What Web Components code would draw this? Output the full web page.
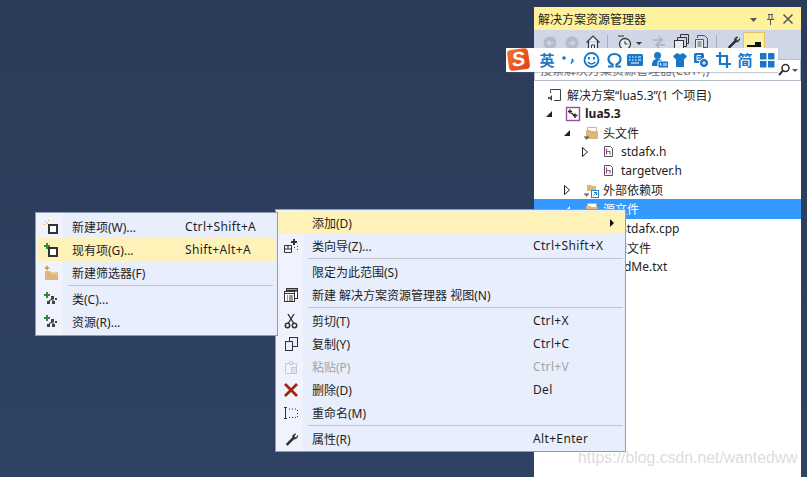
<!DOCTYPE html>
<html>
<head>
<meta charset="utf-8">
<style>
  html, body { margin: 0; height: 100%; overflow: hidden; background: #2d3e5d; }
  body { font: 12px "Noto Sans", "Noto Sans CJK SC", sans-serif; }
</style>
</head>
<body>
<ide-desktop>
  <solution-panel>
    <tree-row level="0" icon="sln">解决方案“lua5.3”(1 个项目)</tree-row>
    <tree-row level="1" arrow="open" icon="proj" bold>lua5.3</tree-row>
    <tree-row level="2" arrow="open" icon="folder">头文件</tree-row>
    <tree-row level="3" arrow="closed" icon="h">stdafx.h</tree-row>
    <tree-row level="3" icon="h">targetver.h</tree-row>
    <tree-row level="2" arrow="closed" icon="deps">外部依赖项</tree-row>
    <tree-row level="2" arrow="open" icon="folder" selected>源文件</tree-row>
    <tree-row level="3" icon="none">stdafx.cpp</tree-row>
    <tree-row level="2" icon="none">资源文件</tree-row>
    <tree-row level="2" icon="none">ReadMe.txt</tree-row>
  </solution-panel>
  <ime-bar></ime-bar>

  <context-menu style="left:275px;top:209px;width:351px;padding:2px 0 1px 2px" key-col="258" text-col="37">
    <menu-item key="" active submenu style="height:22px">添加(D)</menu-item>
    <menu-item icon="wizard" key="Ctrl+Shift+X">类向导(Z)...</menu-item>
    <menu-sep></menu-sep>
    <menu-item>限定为此范围(S)</menu-item>
    <menu-item icon="view">新建 解决方案资源管理器 视图(N)</menu-item>
    <menu-sep></menu-sep>
    <menu-item icon="cut" key="Ctrl+X">剪切(T)</menu-item>
    <menu-item icon="copy" key="Ctrl+C">复制(Y)</menu-item>
    <menu-item icon="paste" key="Ctrl+V" disabled>粘贴(P)</menu-item>
    <menu-item icon="del" key="Del">删除(D)</menu-item>
    <menu-item icon="rename">重命名(M)</menu-item>
    <menu-sep></menu-sep>
    <menu-item icon="wrench" key="Alt+Enter">属性(R)</menu-item>
  </context-menu>

  <context-menu style="left:35px;top:212px;width:243px" key-col="150" text-col="37">
    <menu-item icon="newitem" key="Ctrl+Shift+A">新建项(W)...</menu-item>
    <menu-item icon="existing" key="Shift+Alt+A" active>现有项(G)...</menu-item>
    <menu-item icon="newfilter">新建筛选器(F)</menu-item>
    <menu-sep></menu-sep>
    <menu-item icon="cls">类(C)...</menu-item>
    <menu-item icon="cls">资源(R)...</menu-item>
  </context-menu>

  <water-mark>https://blog.csdn.net/wantedww</water-mark>
</ide-desktop>

<script>
const ICONS = {
  sln: `<path d="M3.500 6V2.500h10v11H7" fill="none" stroke="#424242"/><path d="M1 9.500l1.500 1L5 8v6l-2.500-2.500L1 12.500z" fill="#424242"/>`,
  proj: `<rect x="1.500" y="1.500" width="13" height="13" fill="#fff" stroke="#9b4f96" stroke-width="1.400"/><path d="M5 3.500v4M3 5.500h4M10 7.500v4.500M8 9.500h4.500M6.500 7l2 2" fill="none" stroke="#222" stroke-width="1.400"/>`,
  folder: `<path d="M4.500 2.500h9v4h-9z" fill="#fff" stroke="#c9b48a"/><path d="M3.500 5.500h4l1 1h6v7h-11z" fill="#dcb67a" stroke="#dcb67a"/><path d="M1 12h5M2 13h3M3 14h1" stroke="#444"/>`,
  h: `<path d="M3.500 2.500h6l2 2v8h-8z" fill="#fff" stroke="#555"/><path d="M5.500 4.500v6M5.500 7.500h3.500v3" fill="none" stroke="#9b4f96" stroke-width="1.200"/>`,
  deps: `<path d="M4 3h4l1 1h4v5H4z" fill="#dcb67a"/><path d="M1 12h5M2 13h3M3 14h1" stroke="#444"/><rect x="8.500" y="8.500" width="7" height="7" fill="#fff" stroke="#1e88c9"/><path d="M10.500 13.500l3-3M11 10.500h2.500V13" fill="none" stroke="#1e88c9"/>`,
  newitem: `<rect x="6" y="6" width="8" height="8" fill="#fff" stroke="#333" stroke-width="2"/><path d="M2 2h1v1H2zM5 1h1v1H5zM1 5h1v1H1zM4 4h1v1H4z" fill="#d9a441"/>`,
  existing: `<rect x="6" y="6" width="8" height="8" fill="#fff" stroke="#333" stroke-width="2"/><path d="M3 1h2v2h2v2H5v2H3V5H1V3h2z" fill="#2e8b3d"/>`,
  newfilter: `<path d="M2 6h5l1 1h7v8H2z" fill="#dcb67a"/><path d="M8 8h6" stroke="#f3e2c2"/><path d="M4 0l1 2 2 1-2 1-1 2-1-2-2-1 2-1z" fill="#d9962b"/>`,
  cls: `<path d="M3 1h2v2h2v2H5v2H3V5H1V3h2z" fill="#2e8b3d"/><path d="M8 5h3v3H8zM4 10h3v3H4zM9 10h3v3H9zM12 7h2v2h-2z" fill="#424242"/><path d="M9 8L6 10M10 8v2" stroke="#424242" stroke-width="1.200"/>`,
  wizard: `<path d="M1.500 7.500h7v7h-7zM1.500 11h7M5 7.500V11" fill="none" stroke="#333"/><path d="M10 1h2v2h2v2h-2v2h-2V5H8V3h2z" fill="#333"/><path d="M14 8h1v1h-1zM11 9h1v1h-1zM14 11h1v1h-1z" fill="#333"/>`,
  view: `<rect x="3.500" y="1.500" width="11" height="10" fill="#fff" stroke="#333"/><path d="M3.500 3.500h11" stroke="#333" stroke-width="2"/><rect x="1.500" y="4.500" width="10" height="10" fill="#fff" stroke="#333"/><path d="M1.500 6.500h10M4 9h1M6 9h4M4 11h1M6 11h4M4 13h1M6 13h4" stroke="#333"/>`,
  cut: `<path d="M5 1l5.500 9M11 1L5.500 10" stroke="#333" stroke-width="1.400" fill="none"/><circle cx="4.500" cy="12.500" r="2.200" fill="none" stroke="#333" stroke-width="1.500"/><circle cx="11.500" cy="12.500" r="2.200" fill="none" stroke="#333" stroke-width="1.500"/>`,
  copy: `<rect x="6.500" y="1.500" width="8" height="9" fill="#e9eefc" stroke="#333"/><rect x="2.500" y="5.500" width="7" height="9" fill="#e9eefc" stroke="#333"/>`,
  paste: `<path d="M2.500 4.500h11v10h-11z" fill="none" stroke="#c6c9d0"/><path d="M6.500 2.500h3v3h-3z" fill="#e9eefc" stroke="#c6c9d0"/><path d="M8.500 8.500h5v6h-5z" fill="#dfe3ec" stroke="#c6c9d0"/>`,
  del: `<path d="M2 2l12 12M14 2L2 14" stroke="#a1260d" stroke-width="2.800"/>`,
  rename: `<path d="M2.500 3v10M1 2.500h3M1 13.500h3" stroke="#333" fill="none"/><path d="M6 4h1M9 4h1M12 4h1M14.500 5v1M14.500 8v1M14.500 11v1M6 12.500h1M9 12.500h1M12 12.500h1" stroke="#333" fill="none"/>`,
  wrench: `<path d="M14.500 4.500c.4 2-1.300 3.800-3.400 3.500L5 14c-.8.800-2.200-.6-1.400-1.400L9.500 6.500C9.200 4.400 11 2.600 13 3l-2 2 1 1.500 1 .4z" fill="#333" stroke="#333" stroke-width=".7"/>`
};

class IdeDesktop extends HTMLElement {
  constructor() {
    super();
    this.attachShadow({ mode: 'open' });
    this.shadowRoot.innerHTML = `
      <style>
        :host { display: block; position: relative; width: 807px; height: 477px; overflow: hidden;
          background: linear-gradient(#2c3b59, #2f4263); }
      </style>
      <slot></slot>`;
  }
}

class SolutionPanel extends HTMLElement {
  constructor() {
    super();
    this.attachShadow({ mode: 'open' });
    this.shadowRoot.innerHTML = `
      <style>
        :host { display: flex; flex-direction: column; position: absolute; left: 534px; top: 7px; width: 267px; height: 470px;
          background: #fff; color: #1e1e1e; }
        .title { flex: none; height: 23px; background: #fff29d; display: flex; align-items: center; padding: 0 6px 0 4px;
          font-size: 12px; color: #1e1e1e; }
        .title span { flex: 1; }
        .title svg { display: block; }
        .tools { flex: none; height: 29px; background: #cfd6e5; display: flex; padding: 3px 0 0 8px; box-sizing: border-box; }
        .tools svg { display: block; flex: none; }
        .tools i { flex: none; width: 1px; height: 16px; margin: 2px 0 0; background: #a5adbd; }
        .pin { flex: none; width: 22px; height: 22px; box-sizing: border-box; background: #fff29d; border: 1px solid #e5c365; margin: -1px 0 0 2px; }
        .search { flex: none; height: 22px; box-sizing: border-box; background: #fff; border: 1px solid #b5bccb; margin: 0;
          display: flex; align-items: center; padding-left: 5px; font-size: 12px; color: #6d6d6d; overflow: hidden; }
        .search span { flex: 1; white-space: nowrap; }
        .tree { flex: 1; padding-top: 4px; }
      </style>
      <div class="title"><span>解决方案资源管理器</span>
        <svg width="51" height="14" viewBox="0 0 51 14">
          <path d="M6 6h7l-3.500 4z" fill="#555"/>
          <path d="M24 2.500h5M25 2.500v5h3v-5M23 7.500h7M26.500 8v5" fill="none" stroke="#555"/>
          <path d="M39.500 2.500l9 9M48.500 2.500l-9 9" stroke="#555" stroke-width="1.500"/>
        </svg>
      </div>
      <div class="tools">
        <svg width="16" height="18" viewBox="0 0 16 18"><circle cx="8" cy="10" r="6.500" fill="#b4bac6"/><path d="M11 10H6M8 7.500L5.500 10 8 12.500" fill="none" stroke="#cfd6e5" stroke-width="1.500"/></svg>
        <svg width="16" height="18" viewBox="0 0 16 18" style="margin-left:6px"><circle cx="8" cy="10" r="6.500" fill="#b4bac6"/><path d="M5 10h5M8 7.500l2.500 2.500L8 12.500" fill="none" stroke="#cfd6e5" stroke-width="1.500"/></svg>
        <svg width="16" height="18" viewBox="0 0 16 18" style="margin-left:5px"><path d="M1.500 9.500L8 3l6.500 6.500M3.500 8v8h9V8" fill="#e9ecf3" stroke="#333" stroke-width="1.200"/><path d="M6.500 16v-4h3v4" fill="none" stroke="#333"/></svg>
        <i style="margin-left:6px"></i>
        <svg width="26" height="18" viewBox="0 0 26 18" style="margin-left:9px"><circle cx="8" cy="11" r="5.500" fill="#e9ecf3" stroke="#333" stroke-width="1.300"/><path d="M8 8v3h2.500M1 3h6" fill="none" stroke="#333"/><path d="M19 9h6l-3 3z" fill="#333"/></svg>
        <svg width="16" height="18" viewBox="0 0 16 18" style="margin-left:8px"><path d="M2 7h9M8 4l3 3-3 3M14 12H5M8 9l-3 3 3 3" fill="none" stroke="#a9b0be" stroke-width="1.400"/></svg>
        <svg width="17" height="18" viewBox="0 0 17 18" style="margin-left:6px"><rect x="1.500" y="7.500" width="9" height="9" fill="#e9ecf3" stroke="#333"/><path d="M4.500 7V4.500h9v9H11M7.500 4V1.500h8v9H14" fill="none" stroke="#333"/></svg>
        <svg width="17" height="18" viewBox="0 0 17 18" style="margin-left:3px"><path d="M4.500 5V2.500h7l3 3v9H11" fill="none" stroke="#555"/><path d="M2.500 6.500h8v9h-8z" fill="#e9ecf3" stroke="#555"/><path d="M4.500 9h4M4.500 11h4M4.500 13h4" stroke="#555"/></svg>
        <i style="margin-left:6px"></i>
        <svg width="16" height="18" viewBox="0 0 16 18" style="margin-left:8px"><path d="M14.500 5.500c.4 2-1.300 3.800-3.400 3.500L5 15c-.8.800-2.200-.6-1.400-1.400L9.500 7.500C9.200 5.400 11 3.600 13 4l-2 2 1 1.500 1 .4z" fill="#333" stroke="#333" stroke-width=".7"/></svg>
        <div class="pin"><svg width="20" height="20" viewBox="0 0 20 20"><path d="M3 13h14" stroke="#111" stroke-width="2"/><path d="M11 9h6v3h-6z" fill="#111"/></svg></div>
      </div>
      <div class="search"><span>搜索解决方案资源管理器(Ctrl+;)</span>
        <svg width="24" height="16" viewBox="0 0 24 16" style="flex:none"><circle cx="9.500" cy="6" r="3.500" fill="none" stroke="#333" stroke-width="1.500"/><path d="M7 8.500L3 13" stroke="#333" stroke-width="2"/><path d="M16 7h6l-3 3z" fill="#555"/></svg>
      </div>
      <div class="tree"><slot></slot></div>`;
  }
}

class TreeRow extends HTMLElement {
  constructor() {
    super();
    this.attachShadow({ mode: 'open' });
  }
  connectedCallback() {
    const level = parseInt(this.getAttribute('level') || '0');
    const arrow = this.getAttribute('arrow');
    const icon = this.getAttribute('icon');
    const sel = this.hasAttribute('selected');
    let arrowSvg = '';
    if (arrow === 'open') arrowSvg = `<path d="M9 3v6H3z" fill="${sel ? '#fff' : '#222'}"/>`;
    if (arrow === 'closed') arrowSvg = `<path d="M3.500 1.500l5 4.500-5 4.500z" fill="#fff" stroke="#222"/>`;
    const iconSvg = icon && icon !== 'none'
      ? `<svg class="icon" viewBox="0 0 16 16">${ICONS[icon]}</svg>`
      : '<span class="icon"></span>';
    this.shadowRoot.innerHTML = `
      <style>
        :host { display: block; height: 19px; }
        :host([selected]) { height: 20px; }
        .row { height: 100%; display: flex; align-items: center; white-space: nowrap; font-size: 12px; }
        :host([selected]) .row { background: #3399ff; color: #fff; }
        :host([bold]) .row { font-weight: 700; }
        .arrow { flex: none; width: 12px; height: 12px; margin-left: ${9 + 18 * (level - 1)}px; }
        .icon { flex: none; display: block; width: 16px; height: 16px; margin: 0 4px 0 10px; }
      </style>
      <div class="row">
        <svg class="arrow" viewBox="0 0 12 12">${arrowSvg}</svg>
        ${iconSvg}
        <slot></slot>
      </div>`;
  }
}

class ImeBar extends HTMLElement {
  constructor() {
    super();
    this.attachShadow({ mode: 'open' });
    const b = '#1a76c7';
    this.shadowRoot.innerHTML = `
      <style>
        :host { display: block; position: absolute; left: 506px; top: 48px; }
        .bar { display: flex; align-items: center; height: 24px; width: 272px; box-sizing: border-box;
          background: #fff; padding-left: 33px; box-shadow: 0 1px 1px rgba(90,100,120,.35); }
        .logo { position: absolute; left: 2px; top: 1px; width: 21px; height: 21px; border-radius: 4px;
          background: linear-gradient(135deg, #f4722f, #e2401c); transform: rotate(-8deg);
          display: flex; align-items: center; justify-content: center; color: #fff;
          font: italic 700 20px/21px "Liberation Sans", sans-serif; }
        .zh { flex: none; width: 16px; font: 700 15px "Noto Sans CJK SC", sans-serif; color: ${b}; text-align: center; line-height: 20px; }
        svg { display: block; flex: none; }
      </style>
      <div class="bar">
        <div class="logo">S</div>
        <span class="zh">英</span>
        <svg width="16" height="18" viewBox="0 0 16 18" style="margin-left:5px"><circle cx="4" cy="7" r="1.800" fill="${b}"/><path d="M12 8c1.800 0 1.800 3-1 4.500 0-1.500 1-1.500 1-2.500z" fill="${b}" stroke="${b}"/></svg>
        <svg width="17" height="18" viewBox="0 0 17 18" style="margin-left:7px"><circle cx="8.500" cy="9" r="7" fill="none" stroke="${b}" stroke-width="1.800"/><path d="M6 6v2.500M11 6v2.500" stroke="${b}" stroke-width="1.800"/><path d="M4.800 11c2 2.500 5.400 2.500 7.400 0" fill="none" stroke="${b}" stroke-width="1.500"/></svg>
        <svg width="17" height="18" viewBox="0 0 17 18" style="margin-left:6px"><path d="M2 15.500h4.500v-2C3.500 12 2.500 9.500 2.500 8c0-3 2.500-5 6-5s6 2 6 5c0 1.500-1 4-4 5.500v2H15" fill="none" stroke="${b}" stroke-width="2.200"/></svg>
        <svg width="18" height="18" viewBox="0 0 18 18" style="margin-left:3px"><rect x="1" y="3" width="16" height="12" rx="1.500" fill="${b}"/><path d="M3 6h1.500M6 6h1.500M9 6h1.500M12 6h3M3 9h1.500M6 9h1.500M9 9h1.500M12 9h3M5 12h8" stroke="#fff" stroke-width="1.200"/></svg>
        <svg width="18" height="18" viewBox="0 0 18 18" style="margin-left:7px"><circle cx="6.500" cy="4.500" r="3.500" fill="${b}"/><path d="M1 14c0-4 2-6 5.500-6s5.500 2 5.500 3v4H1z" fill="${b}"/><rect x="7" y="10" width="10.500" height="7" rx="1" fill="${b}" stroke="#fff"/><path d="M9.500 12v2h1.500M13 12v3M15 12v3" stroke="#fff"/></svg>
        <svg width="16" height="18" viewBox="0 0 16 18" style="margin-left:3px"><path d="M5 2l3 1.500L11 2l4 3-2 3-1-.5V16H4V7.500L3 8 1 5z" fill="${b}"/></svg>
        <svg width="16" height="18" viewBox="0 0 16 18" style="margin-left:5px"><rect x="1" y="2" width="10" height="10" rx="1.500" fill="${b}"/><path d="M4 4.500h4M4 7h4M4 9.500h4M4 4.500v5" stroke="#fff"/><circle cx="11" cy="12" r="4.500" fill="${b}" stroke="#fff"/><path d="M9 12h4M11 10v4" stroke="#fff"/></svg>
        <svg width="16" height="18" viewBox="0 0 16 18" style="margin-left:6px"><path d="M5 1v12h11M1 5h11v12" fill="none" stroke="${b}" stroke-width="2.200"/></svg>
        <span class="zh" style="margin-left:6px">简</span>
        <svg width="16" height="18" viewBox="0 0 16 18" style="margin-left:6px"><rect x="1" y="2" width="6.500" height="6.500" fill="${b}"/><rect x="9" y="2" width="6.500" height="6.500" rx="1" fill="${b}"/><rect x="1" y="10" width="6.500" height="6.500" fill="${b}"/><rect x="9" y="10" width="6.500" height="6.500" fill="${b}"/></svg>
      </div>`;
  }
}

class ContextMenu extends HTMLElement {
  constructor() {
    super();
    this.attachShadow({ mode: 'open' });
    this.shadowRoot.innerHTML = `
      <style>
        :host { display: block; position: absolute; box-sizing: border-box; border: 1px solid #8f9cb5; padding: 2px;
          color: #1e1e1e; background: linear-gradient(to right, #f0f3fd 27px, #e9eefc 27px); }
      </style>
      <slot></slot>`;
  }
}

class MenuItem extends HTMLElement {
  constructor() {
    super();
    this.attachShadow({ mode: 'open' });
  }
  connectedCallback() {
    const menu = this.closest('context-menu');
    const textCol = +menu.getAttribute('text-col');
    const keyCol = +menu.getAttribute('key-col');
    const icon = this.getAttribute('icon');
    const key = this.getAttribute('key') || '';
    this.shadowRoot.innerHTML = `
      <style>
        :host { display: block; height: 23px; font-size: 12px; }
        .row { height: 100%; display: grid; grid-template-columns: ${textCol - 3}px ${keyCol - textCol}px 1fr; align-items: center; white-space: nowrap; position: relative; }
        :host([active]) .row { background: #fff2b8; }
        :host([disabled]) .row { color: #a2a4a5; }
        svg.ic { display: block; margin-left: 5px; }
        .key { letter-spacing: .35px; }
        .sub { position: absolute; right: 11px; top: 7px; width: 0; height: 0; border-left: 4px solid #111; border-top: 4px solid transparent; border-bottom: 4px solid transparent; }
      </style>
      <div class="row">
        <span>${icon ? `<svg class="ic" width="16" height="16" viewBox="0 0 16 16">${ICONS[icon]}</svg>` : ''}</span>
        <span><slot></slot></span>
        <span class="key">${key}</span>
        ${this.hasAttribute('submenu') ? '<i class="sub"></i>' : ''}
      </div>`;
  }
}

class MenuSep extends HTMLElement {
  constructor() {
    super();
    this.attachShadow({ mode: 'open' });
    this.shadowRoot.innerHTML = `
      <style>
        :host { display: flow-root; height: 3px; }
        i { display: block; height: 1px; background: #bec3d1; margin: 1px 2px 0 30px; }
      </style>
      <i></i>`;
  }
}

class WaterMark extends HTMLElement {
  constructor() {
    super();
    this.attachShadow({ mode: 'open' });
    this.shadowRoot.innerHTML = `
      <style>
        :host { display: block; position: absolute; left: 578px; top: 449px; font: 15.800px/18px "Liberation Sans", sans-serif;
          color: rgba(190,190,190,.55); white-space: nowrap; }
      </style>
      <slot></slot>`;
  }
}

customElements.define('ide-desktop', IdeDesktop);
customElements.define('solution-panel', SolutionPanel);
customElements.define('tree-row', TreeRow);
customElements.define('ime-bar', ImeBar);
customElements.define('context-menu', ContextMenu);
customElements.define('menu-item', MenuItem);
customElements.define('menu-sep', MenuSep);
customElements.define('water-mark', WaterMark);
</script>
</body>
</html>
